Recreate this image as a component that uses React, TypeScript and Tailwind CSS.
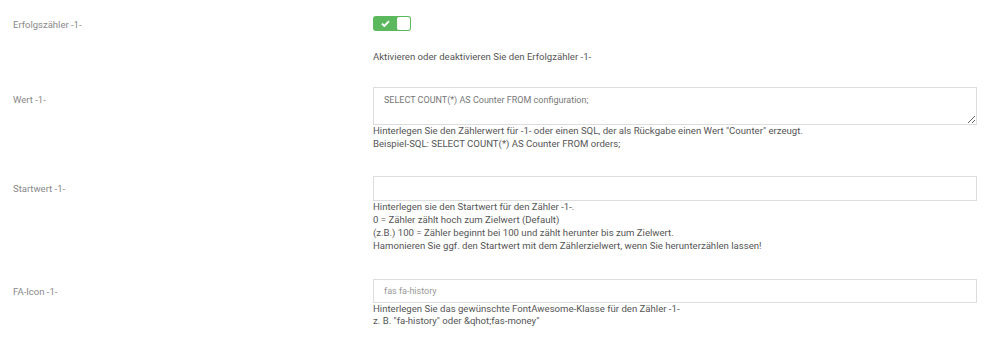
import React from "react";

const Help: React.FC<{ lines: string[] }> = ({ lines }) => (
  <div className="text-[9.6px] leading-[12.8px] text-[#555]">
    {lines.map((l, i) => (
      <div key={i}>{l}</div>
    ))}
  </div>
);

export default function App() {
  return (
    <div
      className="bg-white w-[1000px] h-[342px] overflow-hidden pt-[16px] pl-[13px] pr-[23px]"
      style={{ fontFamily: "Roboto, 'Liberation Sans', sans-serif" }}
    >
      {/* Erfolgszähler */}
      <div className="flex">
        <div className="w-[360px] shrink-0 pt-[2px] text-[9.5px] leading-[13px] text-[#888]">Erfolgszähler -1-</div>
        <div className="flex-1">
          <div className="flex h-[15px] w-[38px] rounded-[3px] bg-[#5cb85c] p-[1px]">
            <div className="flex flex-1 items-center justify-center">
              <svg width="9" height="7" viewBox="0 0 9 7">
                <path d="M1 3.6 L3.4 6 L8 1.2" fill="none" stroke="white" strokeWidth="1.9" />
              </svg>
            </div>
            <div className="w-[13px] rounded-[2px] bg-white" />
          </div>
          <div className="mt-[20px]">
            <Help lines={["Aktivieren oder deaktivieren Sie den Erfolgzähler -1-"]} />
          </div>
        </div>
      </div>

      {/* Wert */}
      <div className="mt-[23px] flex">
        <div className="w-[360px] shrink-0 pt-[6px] text-[9.5px] leading-[13px] text-[#888]">Wert -1-</div>
        <div className="flex-1">
          <textarea
            className="block h-[38px] w-full resize-y border border-[#ddd] px-[10px] py-[6px] text-[9px] leading-[13px] text-[#777] outline-none"
            defaultValue="SELECT COUNT(*) AS Counter FROM configuration;"
          />
          <Help
            lines={[
              'Hinterlegen Sie den Zählerwert für -1- oder einen SQL, der als Rückgabe einen Wert "Counter" erzeugt.',
              "Beispiel-SQL: SELECT COUNT(*) AS Counter FROM orders;",
            ]}
          />
        </div>
      </div>

      {/* Startwert */}
      <div className="mt-[26px] flex">
        <div className="w-[360px] shrink-0 pt-[6px] text-[9.5px] leading-[13px] text-[#888]">Startwert -1-</div>
        <div className="flex-1">
          <input
            className="block h-[25px] w-full border border-[#ddd] px-[10px] text-[9px] text-[#777] outline-none"
            defaultValue=""
          />
          <Help
            lines={[
              "Hinterlegen sie den Startwert für den Zähler -1-.",
              "0 = Zähler zählt hoch zum Zielwert (Default)",
              "(z.B.) 100 = Zähler beginnt bei 100 und zählt herunter bis zum Zielwert.",
              "Hamonieren Sie ggf. den Startwert mit dem Zählerzielwert, wenn Sie herunterzählen lassen!",
            ]}
          />
        </div>
      </div>

      {/* FA-Icon */}
      <div className="mt-[26px] flex">
        <div className="w-[360px] shrink-0 pt-[6px] text-[9.5px] leading-[13px] text-[#888]">FA-Icon -1-</div>
        <div className="flex-1">
          <input
            className="block h-[24px] w-full border border-[#ddd] px-[10px] text-[9px] text-[#999] outline-none"
            defaultValue="fas fa-history"
          />
          <Help
            lines={[
              "Hinterlegen Sie das gewünschte FontAwesome-Klasse für den Zähler -1-",
              'z. B. "fa-history" oder &qhot;fas-money"',
            ]}
          />
        </div>
      </div>
    </div>
  );
}
